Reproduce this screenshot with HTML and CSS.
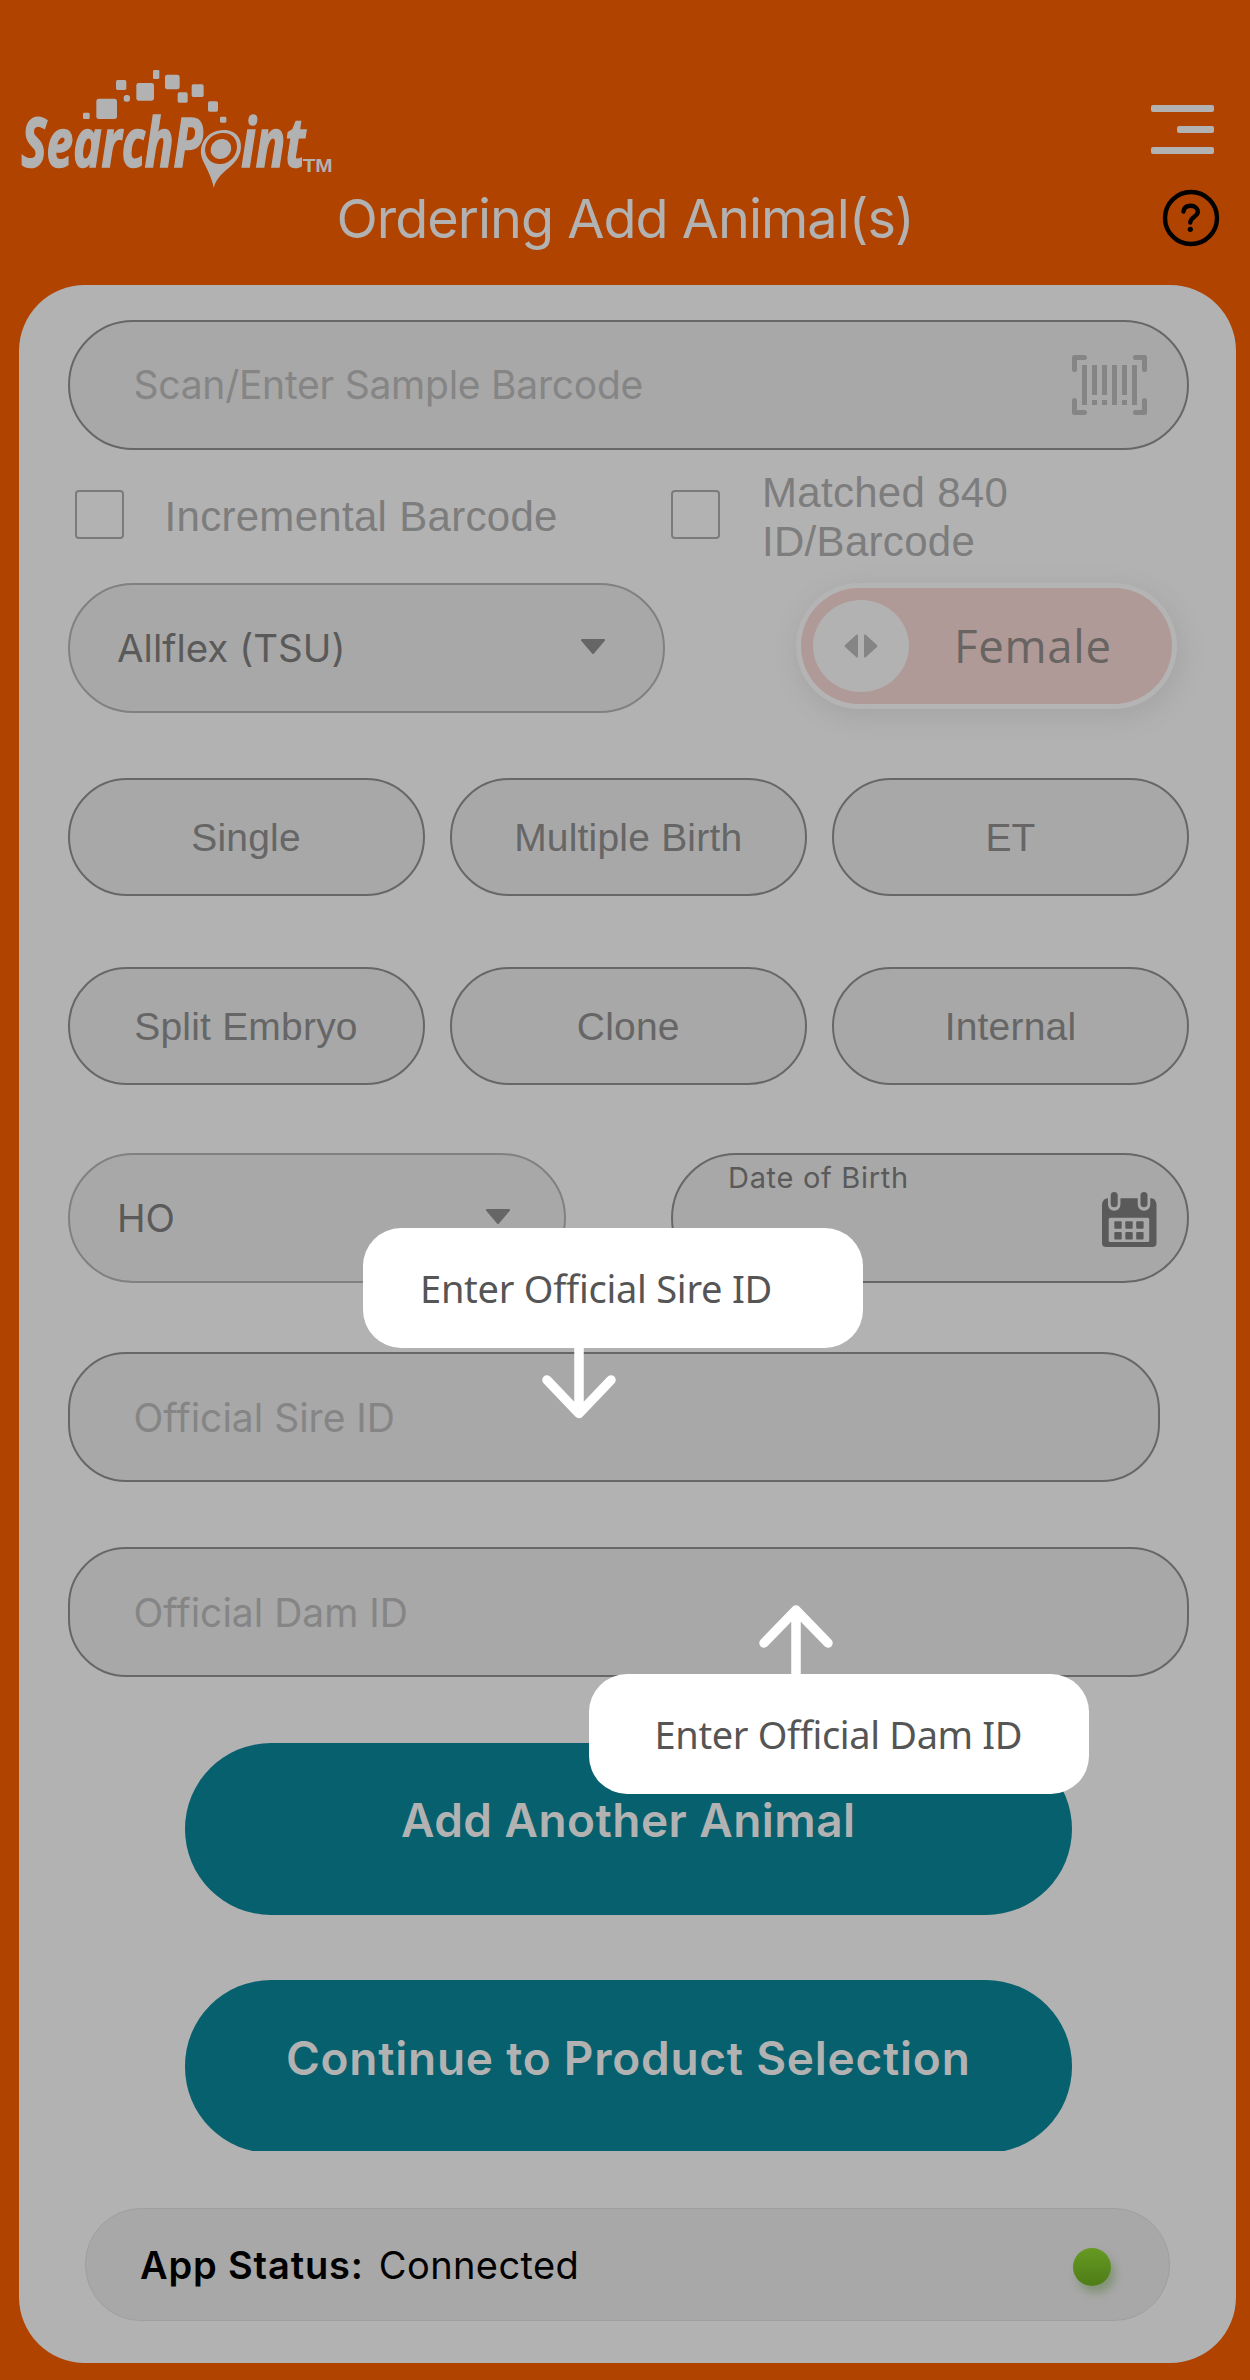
FILE: index.html
```html
<!DOCTYPE html>
<html lang="en">
<head>
<meta charset="utf-8">
<title>SearchPoint - Ordering Add Animal(s)</title>
<link rel="stylesheet" href="styles.css">
</head>
<body>
<div class="app">
  <header class="header">
    <div class="topbar">
      <svg class="logo" width="350" height="150" viewBox="0 0 1050 450" role="img" aria-label="SearchPoint">
        <g fill="#b2b2b2">
          <rect x="249" y="188" width="20" height="19" rx="4"/>
          <rect x="289" y="146" width="62" height="61" rx="8"/>
          <rect x="348" y="90" width="31" height="30" rx="5"/>
          <rect x="371" y="135" width="19" height="20" rx="8"/>
          <rect x="409" y="99" width="53" height="53" rx="7"/>
          <rect x="459" y="60" width="19" height="27" rx="4"/>
          <rect x="495" y="74" width="44" height="44" rx="7"/>
          <rect x="533" y="127" width="30" height="31" rx="5"/>
          <rect x="575" y="103" width="36" height="38" rx="5"/>
          <rect x="624" y="154" width="30" height="31" rx="5"/>
          <rect x="660" y="200" width="19" height="18" rx="4"/>
          <text class="logo-word" x="64" y="350" textLength="544" lengthAdjust="spacingAndGlyphs">SearchP</text>
          <text class="logo-word" x="724" y="350" textLength="192" lengthAdjust="spacingAndGlyphs">int</text>
          <text class="logo-tm" x="908" y="366" textLength="90" lengthAdjust="spacingAndGlyphs">TM</text>
          <path fill-rule="evenodd" d="M641 413C637 385 620 356 609 332C589 287 620 240 672 240C709 240 728 268 722 301C716 333 689 352 672 366C655 381 645 397 641 413ZM670 249C632 249 612 279 616 307C620 332 641 344 663 342C692 339 711 315 711 290C711 263 693 249 670 249Z"/>
          <ellipse cx="663" cy="297" rx="32" ry="29" transform="rotate(-35 663 297)"/>
        </g>
      </svg>
      <div class="menu"><span></span><span class="short"></span><span></span></div>
    </div>
    <div class="titlebar">
      <h1 class="title">Ordering Add Animal(s)</h1>
      <svg class="help" width="58" height="58" viewBox="0 0 58 58" fill="none" stroke="#000">
        <circle cx="29" cy="29" r="26" stroke-width="4.4"/>
        <path d="M21.5 22.500C22 18.500 25 16.800 28.600 16.800C33 16.800 35.800 19.500 35.800 23C35.800 27.500 28.300 28 28.300 33.500" stroke-width="4.400" stroke-linecap="round"/>
        <circle cx="28.300" cy="40.300" r="2.600" fill="#000" stroke="none"/>
      </svg>
    </div>
  </header>

  <main class="card">
    <div class="field scan">
      <span class="placeholder scan-text">Scan/Enter Sample Barcode</span>
      <svg class="barcode" width="76" height="60" viewBox="0 0 76 60">
        <g fill="none" stroke="#858585" stroke-width="5" stroke-linecap="round" stroke-linejoin="round">
          <path d="M2.500 14.500V2.500H12.500M63.500 2.500H72.500V14.500M72.500 45.500V57.500H63.500M12.500 57.500H2.500V45.500"/>
        </g>
        <g fill="#858585">
          <path d="M10 10h5v40h-5zM40 10h5v40h-5zM60 10h5v40h-5z"/>
          <path d="M20 10h5v30h-5zM30 10h5v30h-5zM50 10h5v30h-5zM20 45h5v5h-5zM30 45h5v5h-5zM50 45h5v5h-5z"/>
        </g>
      </svg>
    </div>

    <div class="checks">
      <label class="check first"><span class="box"></span><span class="check-text">Incremental Barcode</span></label>
      <label class="check"><span class="box"></span><span class="check-text matched">Matched 840<br>ID/Barcode</span></label>
    </div>

    <div class="row tag-row">
      <div class="field select tag">
        <span>Allflex (TSU)</span>
        <svg class="caret" width="26" height="16" viewBox="0 0 26 16"><path d="M2 1H24L13 14Z"/></svg>
      </div>
      <div class="toggle">
        <span class="knob"><svg width="34" height="24" viewBox="0 0 34 24" fill="#858585" stroke="#858585" stroke-width="2" stroke-linejoin="round"><path d="M1.500 12L13 1.500V22.500ZM21 1.500L32.500 12L21 22.500Z"/></svg></span>
        <span class="toggle-text">Female</span>
      </div>
    </div>

    <div class="pills">
      <div class="pill">Single</div><div class="pill">Multiple Birth</div><div class="pill">ET</div>
      <div class="pill">Split Embryo</div><div class="pill">Clone</div><div class="pill">Internal</div>
    </div>

    <div class="row breed-row">
      <div class="field select breed">
        <span>HO</span>
        <svg class="caret" width="26" height="16" viewBox="0 0 26 16"><path d="M2 1H24L13 14Z"/></svg>
      </div>
      <div class="field date">
        <span class="date-label">Date of Birth</span>
        <svg class="calendar" width="55" height="55" viewBox="0 0 55 55">
          <path fill="#5a5a5a" d="M5 6.300H50Q54.500 8 54.500 13V51Q54.500 55 50.500 55H4Q0 55 0 51V13Q0 8 5 6.300Z"/>
          <path fill="none" stroke="#a8a8a8" stroke-width="12.500" stroke-linecap="round" d="M12.200 0V12.500M42 0V12.500"/>
          <path fill="none" stroke="#5a5a5a" stroke-width="7" stroke-linecap="round" d="M12.200 3.500V11.700M42 3.500V11.700"/>
          <rect x="6.700" y="25.700" width="40.500" height="24.300" rx="1.500" fill="#a8a8a8"/>
          <g fill="#5a5a5a">
            <rect x="12.300" y="29.300" width="7.400" height="7.400" rx="1"/>
            <rect x="23.300" y="29.300" width="7.400" height="7.400" rx="1"/>
            <rect x="34.200" y="29.300" width="7.400" height="7.400" rx="1"/>
            <rect x="12.300" y="40" width="7.400" height="7.400" rx="1"/>
            <rect x="23.300" y="40" width="7.400" height="7.400" rx="1"/>
            <rect x="34.200" y="40" width="7.400" height="7.400" rx="1"/>
          </g>
        </svg>
      </div>
    </div>

    <div class="field parent sire"><span class="placeholder">Official Sire ID</span></div>
    <div class="field parent dam"><span class="placeholder">Official Dam ID</span></div>

    <div class="button add">Add Another Animal</div>
    <div class="button-clip"><div class="button continue">Continue to Product Selection</div></div>

    <div class="status">
      <strong>App Status:</strong><span class="state">Connected</span><span class="dot"></span>
    </div>
  </main>

  <div class="tip sire-tip">
    <span>Enter Official Sire ID</span>
    <svg class="arrow" width="74" height="72" viewBox="0 0 74 72"><path d="M37 0V63M5 33L37 66.500L69 33"/></svg>
  </div>
  <div class="tip dam-tip">
    <span>Enter Official Dam ID</span>
    <svg class="arrow" width="74" height="72" viewBox="0 0 74 72"><path d="M37 72V8M5 38L37 5L69 38"/></svg>
  </div>
</div>
</body>
</html>
```

FILE: styles.css
```css
* { box-sizing: border-box; }
body { margin: 0; background: #b04300; }
.app {
  position: relative;
  width: 1250px;
  height: 2380px;
  overflow: hidden;
  background: #b04300;
  font-family: Inter, "Liberation Sans", sans-serif;
  font-size: 39px;
  font-variant-ligatures: none;
  color: #5a5a5a;
  white-space: nowrap;
}

/* Header */
.header { height: 284.5px; padding-top: 50px; }
.topbar { display: flex; justify-content: space-between; height: 139px; padding-right: 36px; }
.logo { flex: none; }
.logo-word { font: italic 700 203px "Open Sans", sans-serif; stroke: #b2b2b2; stroke-width: 5px; }
.logo-tm { font: 700 54px "Liberation Sans", sans-serif; }
.menu { display: flex; flex-direction: column; align-items: flex-end; gap: 14px; padding-top: 55px; }
.menu span { width: 63px; height: 7px; border-radius: 2px; background: #b2b2b2; }
.menu .short { width: 37px; }
.titlebar { display: flex; align-items: flex-start; justify-content: space-between; padding: 0 30px 0 336.5px; }
.title { margin: 0; font-size: 54px; line-height: 60px; font-weight: 400; letter-spacing: -1px; color: #b2b2b2; }

/* Card */
.card {
  display: flex;
  flex-direction: column;
  width: 1217px;
  height: 2078px;
  margin-left: 19px;
  padding: 35px 47px 0 48.5px;
  border-radius: 66px;
  background: #b2b2b2;
}
.field {
  display: flex;
  align-items: center;
  flex: none;
  height: 130px;
  border: 2px solid #676767;
  border-radius: 65px;
  background: #a8a8a8;
}
.placeholder { color: #858585; }
.scan { justify-content: space-between; padding: 0 39px 0 64px; }
.scan-text { letter-spacing: -.25px; }
.barcode { flex: none; }

.checks { display: flex; align-items: center; height: 133.5px; padding-left: 7px; flex: none; }
.check { display: flex; align-items: center; font: 42px/49px "Liberation Sans", sans-serif; letter-spacing: .3px; color: #7d7d7d; }
.check.first { width: 596px; }
.matched { padding: 2px 0 0 1.5px; }
.box { width: 49px; height: 49px; margin-right: 41px; border: 2.5px solid #7b7b7b; border-radius: 4px; margin-top: -3px; flex: none; }

.row { display: flex; justify-content: space-between; flex: none; }
.select { justify-content: space-between; padding: 0 57px 0 47.5px; border-color: #818181; font-size: 38.5px; }
.caret { fill: #666; stroke: #666; stroke-width: 2px; stroke-linejoin: round; margin-top: -3px; }
.tag { width: 597px; }
.breed { width: 498px; padding-right: 53px; }
.toggle {
  display: flex;
  align-items: center;
  width: 371px;
  height: 116px;
  margin: 5px 17.5px 0 0;
  padding-left: 12px;
  border-radius: 58px;
  background: #b09a98;
  box-shadow: 0 0 0 5px #b4b4b4, 3px 7px 22px 8px rgba(120, 120, 120, .2);
}
.knob { display: flex; align-items: center; justify-content: center; width: 96px; height: 92px; border-radius: 50%; background: #b2b2b2; }
.toggle-text { margin-left: 45.5px; padding-bottom: 3px; font: 45.5px "Open Sans", sans-serif; letter-spacing: .7px; color: #686462; }

.pills { display: grid; grid-template-columns: repeat(3, 357px); justify-content: space-between; row-gap: 71px; margin-top: 65px; flex: none; }
.pill {
  display: flex;
  align-items: center;
  justify-content: center;
  height: 118px;
  padding-top: 2px;
  border: 2px solid #676767;
  border-radius: 59px;
  background: #a8a8a8;
  font: 39px "Liberation Sans", sans-serif;
  letter-spacing: .2px;
  color: #666;
}

.breed-row { margin-top: 68px; }
.date { width: 518px; align-items: flex-start; justify-content: space-between; padding: 0 30px 0 55px; }
.date-label { font-size: 29px; line-height: 46px; letter-spacing: .7px; }
.calendar { margin-top: 37px; }
.parent { border-radius: 58px; padding-left: 64px; }
.sire { width: 1092.5px; margin-top: 69px; }
.dam { margin-top: 65px; }

.button {
  display: flex;
  align-items: center;
  justify-content: center;
  flex: none;
  width: 887px;
  height: 172.5px;
  padding-bottom: 17px;
  border-radius: 86px;
  background: #07606e;
  color: #b2b2b2;
  font-size: 46px;
  font-weight: 600;
}
.add { align-self: center; margin-top: 65.5px; letter-spacing: .45px; }
.continue { letter-spacing: .75px; }
.button-clip { flex: none; align-self: center; height: 170.5px; margin-top: 65px; overflow: hidden; }

.status {
  display: flex;
  align-items: center;
  flex: none;
  height: 112.5px;
  margin: 57.5px 19px 0 17px;
  padding: 2px 58px 0 54.5px;
  border: 1.5px solid #9f9f9f;
  border-radius: 56px;
  background: #a8a8a8;
  color: #000;
  font-size: 38px;
}
.status strong { font-weight: 600; letter-spacing: .85px; }
.state { margin-left: 15px; letter-spacing: .4px; }
.dot { width: 38px; height: 38px; margin: 4px 0 0 auto; border-radius: 50%; background: linear-gradient(#669a22, #4e7c18); box-shadow: 4px 7px 8px rgba(60, 110, 30, .35); }

/* Coach marks over the form */
.tip {
  position: absolute;
  width: 500px;
  height: 120px;
  display: flex;
  align-items: center;
  border-radius: 38px;
  background: #fff;
  color: #555;
  font-family: "Noto Sans", sans-serif;
  font-size: 38px;
  font-variant-ligatures: normal;
}
.sire-tip { left: 363px; top: 1228px; padding-left: 57px; letter-spacing: -.25px; }
.dam-tip { left: 589px; top: 1674px; padding-left: 65.5px; letter-spacing: -.35px; }
.arrow { position: absolute; fill: none; stroke: #fff; stroke-width: 9.5px; stroke-linecap: round; stroke-linejoin: round; }
.sire-tip .arrow { left: 179px; top: 119px; }
.dam-tip .arrow { left: 170px; top: -69px; }
```
